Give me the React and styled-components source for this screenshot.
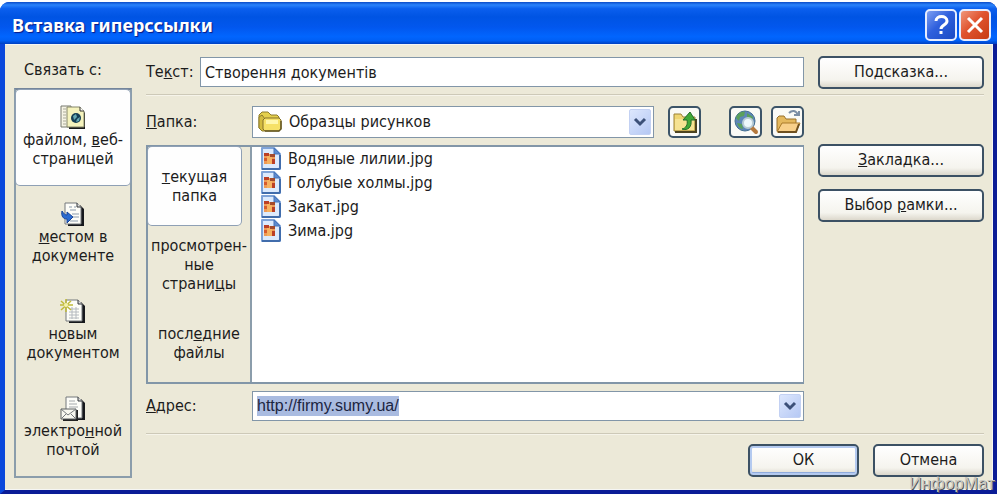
import React, { useEffect, useRef } from "react";
import styled, { createGlobalStyle, css } from "styled-components";

const GlobalStyle = createGlobalStyle`
  *, *::before, *::after { box-sizing: border-box; }
  body {
    margin: 0;
    background: #fdfeff;
    color: #1c1c1c;
    font-family: "DejaVu Sans Condensed", "DejaVu Sans", sans-serif;
    font-size: 16px;
    line-height: 20px;
  }
  button, input, select { font: inherit; color: inherit; }
  ul { list-style: none; margin: 0; padding: 0; }
`;

const Dialog = styled.section`
  position: relative;
  margin: 2px 3px 0 0;
  border: solid #0a1c96;
  border-width: 0 4px 4px 5px;
  border-left-color: #0a48dc;
  border-radius: 9px 9px 0 0;
  background: #0a48dc;
`;

const TitleBar = styled.header`
  display: flex;
  align-items: center;
  gap: 2px;
  height: 42px;
  margin: 0 -4px 0 -5px;
  padding: 4px 6px 0 12px;
  border-radius: 9px 9px 0 0;
  background: linear-gradient(#0a4bc8 0%, #2a83fb 7%, #0b5fee 16%, #0054e3 35%, #0257ee 60%, #0165fe 82%, #005ff5 92%, #0040c0 100%);
`;

const Title = styled.h1`
  flex: 1;
  margin: 0;
  color: #fff;
  font-family: "Noto Sans", sans-serif;
  font-size: 18px;
  line-height: 24px;
  font-weight: 700;
  text-shadow: 1px 1px 1px #0a1883;
`;

const CaptionButton = styled.button`
  display: grid;
  place-items: center;
  width: 32px;
  height: 32px;
  padding: 0;
  border: 2px solid #e6edff;
  border-radius: 5px;
  background: ${(p) =>
    p.$danger
      ? "linear-gradient(135deg, #f0987c, #e0532f 45%, #c73c14)"
      : "linear-gradient(135deg, #7d9ff2, #2f60dd 45%, #1c4bc4)"};
`;

const Body = styled.div`
  display: flex;
  gap: 14px;
  padding: 11px 8px 11px 9px;
  border: solid #f5f6f4;
  border-width: 1px 1px 1px 0;
  background: #ece9d8;
`;

const LinkPanel = styled.nav`
  flex: none;
  width: 118px;
`;

const PanelLabel = styled.div`
  height: 32px;
  padding: 4px 10px;
  white-space: nowrap;
`;

const LinkList = styled.ul`
  border: 2px solid #8b9dab;
  border-top-color: #75869b;
`;

const selectedFace = css`
  background: #fefefe;
  box-shadow: 0 0 0 1px #8fa0b5;
  border-radius: 4px;
`;

const LinkButton = styled.button`
  display: flex;
  flex-direction: column;
  align-items: center;
  width: 100%;
  height: ${(p) => (p.$selected ? "95px" : "97px")};
  padding: 15px 0 0;
  border: 0;
  background: none;
  line-height: 19px;
  white-space: nowrap;
  ${(p) => p.$selected && selectedFace}
`;

const LinkItem = styled.li`
  height: 97px;
  &:last-child { height: 95px; }
`;

const Main = styled.div`
  flex: 1;
  min-width: 0;
`;

const Columns = styled.div`
  display: flex;
  gap: 14px;
`;

const Fields = styled.div`
  flex: 1;
  min-width: 0;
`;

const SideButtons = styled.div`
  display: flex;
  flex: none;
  flex-direction: column;
  gap: 12px;
  width: 166px;
  padding-top: ${(p) => (p.$offset ? "38px" : "0")};
`;

const FieldRow = styled.div`
  display: flex;
  align-items: center;
  height: ${(p) => p.$height || 32}px;
`;

const Label = styled.label`
  flex: none;
  width: ${(p) => (p.$short ? 54 : 106)}px;
`;

const fieldFrame = css`
  border: 1px solid #8296a8;
  background: #fff;
`;

const TextInput = styled.input`
  ${fieldFrame}
  flex: 1;
  min-width: 0;
  height: 30px;
  padding: 0 4px;
  outline: 0;
`;

const Separator = styled.hr`
  height: 2px;
  margin: ${(p) => (p.$bottom ? "12px 0 9px" : "5px 0 10px")};
  border: 0;
  border-top: 1px solid #cdc9b8;
  background: #f6f4ea;
`;

const Combo = styled.div`
  ${fieldFrame}
  display: flex;
  flex: ${(p) => (p.$fixed ? "0 1 402px" : "1")};
  align-items: center;
  min-width: 0;
  height: ${(p) => (p.$fixed ? 32 : 30)}px;
  padding: 2px 2px 2px 4px;
`;

const ComboSelect = styled.select`
  flex: 1;
  min-width: 0;
  height: 26px;
  padding: 0 0 0 6px;
  border: 0;
  outline: 0;
  appearance: none;
  background: transparent;
`;

const ComboInput = styled.input`
  flex: 1;
  min-width: 0;
  height: 20px;
  padding: 0;
  border: 0;
  outline: 0;
  background: transparent;
  font-family: "Liberation Sans", sans-serif;
  line-height: 20px;
  &::selection { background: #a9bbe0; color: #1c2540; }
`;

const DropButton = styled.button`
  display: grid;
  place-items: center;
  flex: none;
  width: 22px;
  height: 100%;
  padding: 0;
  border: 1px solid #c3d1f3;
  border-radius: 2px;
  background: linear-gradient(135deg, #dde7fd, #b5c8f4);
`;

const ToolGroup = styled.div`
  display: flex;
  flex: 1;
  justify-content: flex-end;
  gap: 9px;
`;

const ToolButton = styled.button`
  display: grid;
  place-items: center;
  flex: none;
  width: 33px;
  height: 32px;
  margin-left: ${(p) => (p.$gap ? "19px" : "0")};
  padding: 0;
  border: 2px solid #3c5468;
  border-radius: 5px;
  background: #fafaf6;
`;

const PushButton = styled.button`
  flex: none;
  width: ${(p) => p.$width || "100%"};
  height: 33px;
  padding: 0 0 2px;
  border: 2px solid #3c5164;
  border-radius: 5px;
  background: linear-gradient(#fff, #f5f4ee 75%, #dcd8cc);
  ${(p) => p.$primary && css`box-shadow: inset 0 0 0 2px #b4caf0, inset 0 -3px 0 #8fabdc;`}
`;

const Browser = styled.div`
  ${fieldFrame}
  display: flex;
  height: 239px;
  margin: 7px 0;
  border-width: 2px 1px 2px 2px;
  background: #ece9d8;
`;

const Tabs = styled.div`
  display: flex;
  flex: none;
  flex-direction: column;
  width: 104px;
  border-right: 2px solid #8b9dab;
`;

const Tab = styled.button`
  display: flex;
  flex: 1;
  align-items: center;
  justify-content: center;
  width: ${(p) => (p.$selected ? "93px" : "100%")};
  padding: 0;
  border: 0;
  background: none;
  line-height: 19px;
  white-space: nowrap;
  ${(p) => p.$selected && selectedFace}
`;

const FileList = styled.ul`
  flex: 1;
  background: #fff;
`;

const FileButton = styled.button`
  display: flex;
  align-items: center;
  gap: 6px;
  height: 24px;
  padding: 0 8px;
  border: 0;
  background: none;
`;

const Footer = styled.footer`
  display: flex;
  justify-content: flex-end;
  gap: 14px;
`;

const Watermark = styled.div`
  position: absolute;
  right: -2px;
  bottom: -4px;
  color: #c6c6c0;
  font-family: "Liberation Sans", sans-serif;
  font-size: 17px;
  line-height: 20px;
  text-shadow: 1px 1px 0 #55585e;
`;

const Page = ({ x = 6, y = 1 }) => (
  <g>
    <path d={`M${x + 3} ${y + 2}h12l4 4v17H${x + 3}z`} fill="#16181c" />
    <path d={`M${x} ${y}h12l4 4v17H${x}z`} fill="#fdfdf8" stroke="#75797d" />
    <path d={`M${x + 12} ${y}v4h4`} fill="#ddd" stroke="#303438" />
  </g>
);

const WebPageIcon = () => (
  <svg width="26" height="25" viewBox="0 0 26 25">
    <path d="M1 1h10v21H1z" fill="#f5f3e4" stroke="#77796e" />
    <path d="M3 4h3M3 7h3M3 10h3M3 13h3M3 16h3M3 19h3" stroke="#aaa998" />
    <path d="M9 4h13l3 4v16H9z" fill="#17191b" />
    <path d="M7 2h13l4 4v16H7z" fill="#f5f3bd" stroke="#85866a" />
    <path d="M20 2v4h4" fill="#fff" stroke="#34352d" />
    <circle cx="16" cy="13" r="5" fill="#153e55" />
    <path d="m13 11 3-2 1 3-3 3zM17 14l3-2-1 4-3 1z" fill="#65aab4" />
  </svg>
);

const PlaceIcon = () => (
  <svg width="26" height="25" viewBox="0 0 26 25">
    <Page x={5} />
    <path d="M9 5h3M14 5h2M10 8h6M12 12h7M13 15h6M10 19h8" stroke="#8b9bad" />
    <path d="M2 9c-1 5 1 8 5 8v4l6-6-6-5v3c-2 0-3-1-5-4z" fill="#2b6bd0" stroke="#174599" />
  </svg>
);

const NewDocIcon = () => (
  <svg width="26" height="25" viewBox="0 0 26 25">
    <Page />
    <path d="M10 10h9M9 13h10M9 16h10M9 19h10M12 8v12M16 8v12" stroke="#b4b9be" />
    <path d="M6 0v13M0 6h13M1 2l10 9M11 2 1 11" stroke="#c0bb37" strokeWidth="1.5" />
    <circle cx="6" cy="6" r="2" fill="#f5f2ac" />
  </svg>
);

const MailIcon = () => (
  <svg width="26" height="25" viewBox="0 0 26 25">
    <Page />
    <path d="M9 5h6M9 8h8M9 11h9" stroke="#a5a9ac" />
    <path d="M3 14h15v11H3z" fill="#222" />
    <path d="M1 13h15v10H1z" fill="#f8f8f0" stroke="#5b5e61" />
    <path d="m1 13 7 6 8-6M1 23l5-5M16 23l-5-5" fill="none" stroke="#74787b" />
  </svg>
);

const FolderIcon = () => (
  <svg width="26" height="22" viewBox="0 0 26 22">
    <path d="M2 17V4l3-3h6l3 3h6l2 2v4" fill="#e4cf4c" stroke="#8d7b2b" />
    <path d="M2 17V6l3-2 3 4v12H5z" fill="#d3bb3e" stroke="#8d7b2b" />
    <path d="M6 9l2-2h14l2 2v9l-2 2H8l-2-2z" fill="#f6e168" stroke="#84702a" />
    <path d="M9 9h12v4H9z" fill="#fff7ae" />
    <path d="M8 20h14l2-2v-8" fill="none" stroke="#665823" strokeWidth="1.5" />
  </svg>
);

const ImageFileIcon = () => (
  <svg width="22" height="24" viewBox="0 0 22 24">
    <path d="M2 1h12l6 6v15H2z" fill="#dceafd" stroke="#7fa3d8" strokeWidth="2" strokeLinejoin="round" />
    <path d="M14 1v6h6z" fill="#5d8bcf" stroke="#4674b9" />
    <path d="M2 22h17l1-1V8" fill="none" stroke="#416dac" strokeWidth="2" />
    <path d="M4 7h11v10H4z" fill="#ee9a55" />
    <path d="M4 6h5v3H4zM12 12h3v5h-3z" fill="#bb3f26" />
    <path d="M7 9h5v8H7z" fill="#f6b262" />
    <path d="M10 7h5v3h-5z" fill="#a34a2c" />
    <path d="M4 11h3v3H4z" fill="#d65b2e" />
  </svg>
);

const UpFolderIcon = () => (
  <svg width="26" height="24" viewBox="0 0 26 24">
    <path d="M2 6V4h7l2 3h12v14H2z" fill="#efd673" stroke="#9c8236" />
    <path d="M3 9h19v11H3z" fill="#f6e393" />
    <path d="M3 22h21V9" fill="none" stroke="#4d4420" strokeWidth="2" />
    <path d="M10 19c4-1 6-4 5-9h-4l7-8 5 8h-4c1 7-3 11-9 9z" fill="#40a937" stroke="#216c2a" />
  </svg>
);

const WebSearchIcon = () => (
  <svg width="26" height="26" viewBox="0 0 26 26">
    <circle cx="12" cy="12" r="10" fill="#5d86b8" stroke="#436f91" />
    <path d="M3 9c1-4 5-7 9-6l-1 4-4 1-1 4zM14 4l6 4-1 5-5-2zM4 14l5 1 1 5c-3 0-5-3-6-6z" fill="#5aa05c" />
    <path d="m19 19 4 4" stroke="#b4793e" strokeWidth="4" strokeLinecap="round" />
    <circle cx="15" cy="14" r="5" fill="#edf8fb" stroke="#b9ccd4" strokeWidth="2" />
  </svg>
);

const OpenFolderIcon = () => (
  <svg width="26" height="26" viewBox="0 0 26 26">
    <path d="M2 22V9l2-2h5l2 3h10v12z" fill="#e4b85d" stroke="#97702d" />
    <path d="m2 23 5-9h18l-4 9z" fill="#f8d08a" stroke="#aa7a2a" />
    <path d="M3 23h18l3-8" fill="none" stroke="#6e501f" strokeWidth="2" />
    <path d="M14 4c3-3 7-3 9 2M19 6h5V2" fill="none" stroke="#7c8fa6" strokeWidth="2" />
  </svg>
);

const Chevron = () => (
  <svg width="14" height="10" viewBox="0 0 14 10">
    <path d="m2 2 5 5 5-5" fill="none" stroke="#3c5078" strokeWidth="3" />
  </svg>
);

const linkTargets = [
  { id: "file", icon: WebPageIcon, text: <>файлом, <u>в</u>еб-<br />страницей</> },
  { id: "place", icon: PlaceIcon, text: <><u>м</u>естом в<br />документе</> },
  { id: "new", icon: NewDocIcon, text: <>н<u>о</u>вым<br />документом</> },
  { id: "mail", icon: MailIcon, text: <>электро<u>н</u>ной<br />почтой</> },
];

const views = [
  { id: "current", text: <><u>т</u>екущая<br />папка</> },
  { id: "browsed", text: <>просмотрен-<br />ные<br />страни<u>ц</u>ы</> },
  { id: "recent", text: <>посл<u>е</u>дние<br />файлы</> },
];

const files = ["Водяные лилии.jpg", "Голубые холмы.jpg", "Закат.jpg", "Зима.jpg"];

export default function App() {
  const address = useRef(null);

  useEffect(() => {
    address.current.focus();
    address.current.select();
  }, []);

  return (
    <>
      <GlobalStyle />
      <Dialog role="dialog" aria-labelledby="dialog-title">
        <TitleBar>
          <Title id="dialog-title">Вставка гиперссылки</Title>
          <CaptionButton aria-label="Справка">
            <svg width="20" height="24" viewBox="0 0 20 24" fill="none" stroke="#fff" strokeWidth="3">
              <path d="M5 8c0-6 11-6 11 0 0 4-6 4-6 8M10 18v3" />
            </svg>
          </CaptionButton>
          <CaptionButton $danger aria-label="Закрыть">
            <svg width="20" height="20" viewBox="0 0 20 20" stroke="#fff" strokeWidth="3">
              <path d="m3 3 14 14M17 3 3 17" />
            </svg>
          </CaptionButton>
        </TitleBar>
        <Body>
          <LinkPanel aria-label="Связать с">
            <PanelLabel>Связать с:</PanelLabel>
            <LinkList>
              {linkTargets.map(({ id, icon: Icon, text }, i) => (
                <LinkItem key={id}>
                  <LinkButton $selected={i === 0}>
                    <Icon />
                    <span>{text}</span>
                  </LinkButton>
                </LinkItem>
              ))}
            </LinkList>
          </LinkPanel>
          <Main>
            <Columns>
              <Fields>
                <FieldRow>
                  <Label $short htmlFor="text">Те<u>к</u>ст:</Label>
                  <TextInput id="text" defaultValue="Створення документів" />
                </FieldRow>
              </Fields>
              <SideButtons>
                <PushButton>По<u>д</u>сказка...</PushButton>
              </SideButtons>
            </Columns>
            <Separator />
            <Columns>
              <Fields>
                <FieldRow>
                  <Label htmlFor="folder"><u>П</u>апка:</Label>
                  <Combo $fixed>
                    <FolderIcon />
                    <ComboSelect id="folder">
                      <option>Образцы рисунков</option>
                    </ComboSelect>
                    <DropButton aria-label="Список папок" tabIndex={-1}><Chevron /></DropButton>
                  </Combo>
                  <ToolGroup>
                    <ToolButton aria-label="На уровень вверх"><UpFolderIcon /></ToolButton>
                    <ToolButton $gap aria-label="Найти в Интернете"><WebSearchIcon /></ToolButton>
                    <ToolButton aria-label="Найти файл"><OpenFolderIcon /></ToolButton>
                  </ToolGroup>
                </FieldRow>
                <Browser>
                  <Tabs>
                    {views.map(({ id, text }, i) => (
                      <Tab key={id} $selected={i === 0}><span>{text}</span></Tab>
                    ))}
                  </Tabs>
                  <FileList>
                    {files.map((name) => (
                      <li key={name}>
                        <FileButton><ImageFileIcon />{name}</FileButton>
                      </li>
                    ))}
                  </FileList>
                </Browser>
                <FieldRow $height={30}>
                  <Label htmlFor="address"><u>А</u>дрес:</Label>
                  <Combo>
                    <ComboInput id="address" ref={address} defaultValue="http://firmy.sumy.ua/" />
                    <DropButton aria-label="Список адресов" tabIndex={-1}><Chevron /></DropButton>
                  </Combo>
                </FieldRow>
              </Fields>
              <SideButtons $offset>
                <PushButton><u>З</u>акладка...</PushButton>
                <PushButton>Выбор <u>р</u>амки...</PushButton>
              </SideButtons>
            </Columns>
            <Separator $bottom />
            <Footer>
              <PushButton $width="111px" $primary>ОК</PushButton>
              <PushButton $width="111px">Отмена</PushButton>
            </Footer>
          </Main>
        </Body>
        <Watermark>ИнфорМат</Watermark>
      </Dialog>
    </>
  );
}
